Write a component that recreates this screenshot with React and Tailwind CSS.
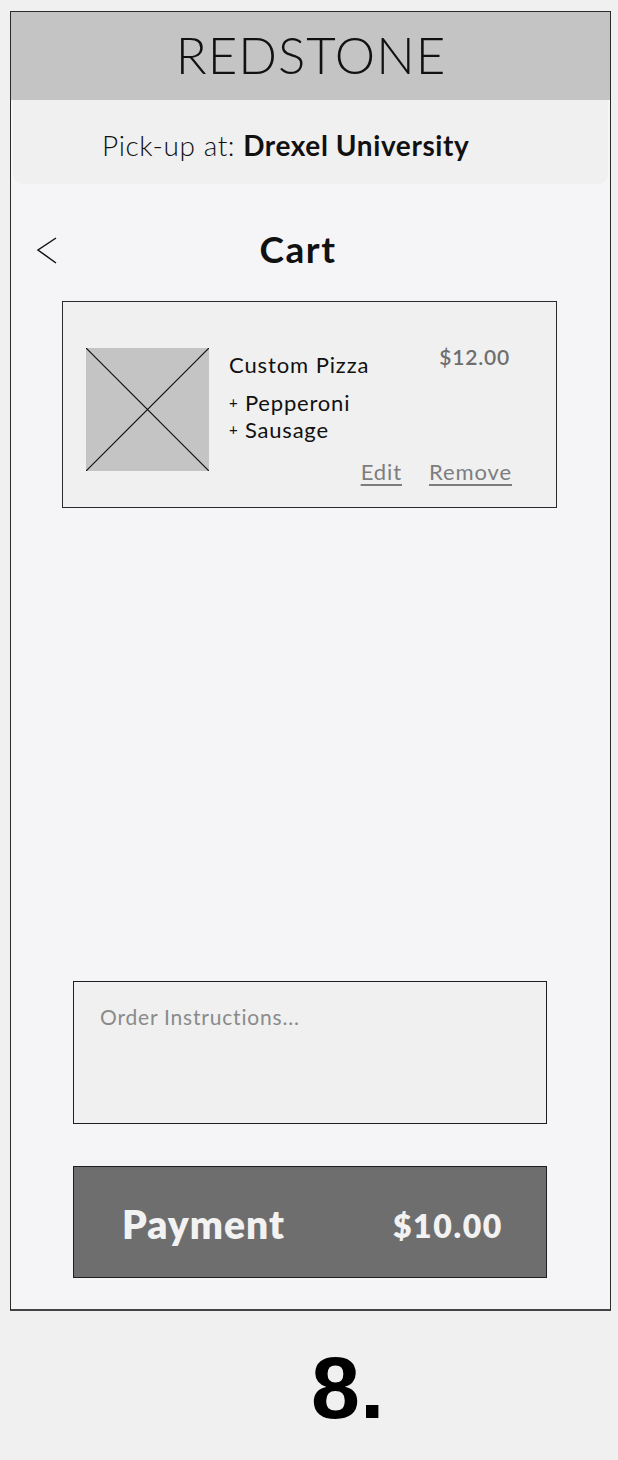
import React from 'react';

const CartItem = () => (
  <div className="ml-[51px] mt-[30px] h-[207px] w-[495px] border border-[#2b2b2b] bg-[#f0f0f0] pl-[23px] pt-[46px] flex">
    <svg width="123" height="123" viewBox="0 0 123 123" className="shrink-0">
      <rect x="0" y="0" width="123" height="123" fill="#c4c4c4" />
      <line x1="0" y1="0" x2="123" y2="123" stroke="#111" strokeWidth="1.2" />
      <line x1="123" y1="0" x2="0" y2="123" stroke="#111" strokeWidth="1.2" />
    </svg>
    <div className="ml-[20px] w-[285px] relative">
      <div className="flex justify-between">
        <span className="mt-[0px] text-[22px] tracking-[0.9px] text-[#111]">Custom Pizza</span>
        <span className="-mt-[7px] mr-[4px] text-[21px] tracking-[0.8px] font-semibold text-[#6e6e6e]">$12.00</span>
      </div>
      <div className="mt-[8px] text-[22px] leading-[27px] tracking-[0.8px] text-[#111]">
        <div><span className="text-[15px] align-[3px]">+</span> Pepperoni</div>
        <div><span className="text-[15px] align-[3px]">+</span> Sausage</div>
      </div>
      <div className="mt-[12px] flex justify-end gap-[27px] pr-[2px] text-[22px] tracking-[0.9px] text-[#7d7d7d]">
        <span className="underline underline-offset-[4px]">Edit</span>
        <span className="underline underline-offset-[4px]">Remove</span>
      </div>
    </div>
  </div>
);

export default function App() {
  return (
    <div className="min-h-[1460px] w-[618px] bg-[#f0f0f0] pt-[11px] pl-[10px]" style={{ fontFamily: 'Lato, "Open Sans", sans-serif' }}>
      <div className="flex h-[1300px] w-[601px] flex-col border border-[#2b2b2b] border-b-2 border-b-[#444] bg-[#f5f5f7]">
        <div className="flex h-[88px] items-center justify-center bg-[#c4c4c4]">
          <h1 className="text-[51px] font-light tracking-[1px] text-[#111] leading-none -mt-[4px] ml-[1px]">REDSTONE</h1>
        </div>
        <div className="mx-[2px] flex h-[84px] items-center rounded-b-[10px] bg-[#f0f0f0] pl-[89px] pt-[6px] text-[28px] tracking-[0.6px] text-[#111]">
          <span className="font-light">Pick-up at:</span>
          <span className="ml-[8px] font-bold">Drexel University</span>
        </div>

        <div className="relative mt-[47px] flex h-[40px] items-center justify-center">
          <svg width="24" height="30" viewBox="0 0 24 30" className="absolute left-[24px] top-[5px]">
            <polyline points="21,2 3,14 21,27" fill="none" stroke="#111" strokeWidth="1.5" />
          </svg>
          <h2 className="ml-[-25px] -mt-[5px] text-[37px] tracking-[1.5px] font-bold text-[#111]">Cart</h2>
        </div>

        <CartItem />

        <div className="flex-1" />

        <div className="ml-[62px] h-[143px] w-[474px] border border-[#1f1f1f] bg-[#f0f0f0] pl-[26px] pt-[19px]">
          <span className="text-[21px] tracking-[0.8px] text-[#8a8a8a]">Order Instructions...</span>
        </div>

        <div className="ml-[62px] mt-[42px] mb-[31px] flex h-[112px] w-[474px] items-center justify-between border border-[#1f1f1f] bg-[#6e6e6e] pl-[48px] pr-[43px] text-[#f2f2f2]">
          <span className="text-[39px] tracking-[1px] font-extrabold mt-[4px]">Payment</span>
          <span className="mt-[7px] text-[32px] tracking-[1.6px] font-extrabold">$10.00</span>
        </div>
      </div>
      <div className="mt-[33px] pl-[301px] text-[88px] font-bold leading-none text-black" style={{ fontFamily: '"Liberation Sans", Arial, sans-serif' }}>
        8.
      </div>
    </div>
  );
}
